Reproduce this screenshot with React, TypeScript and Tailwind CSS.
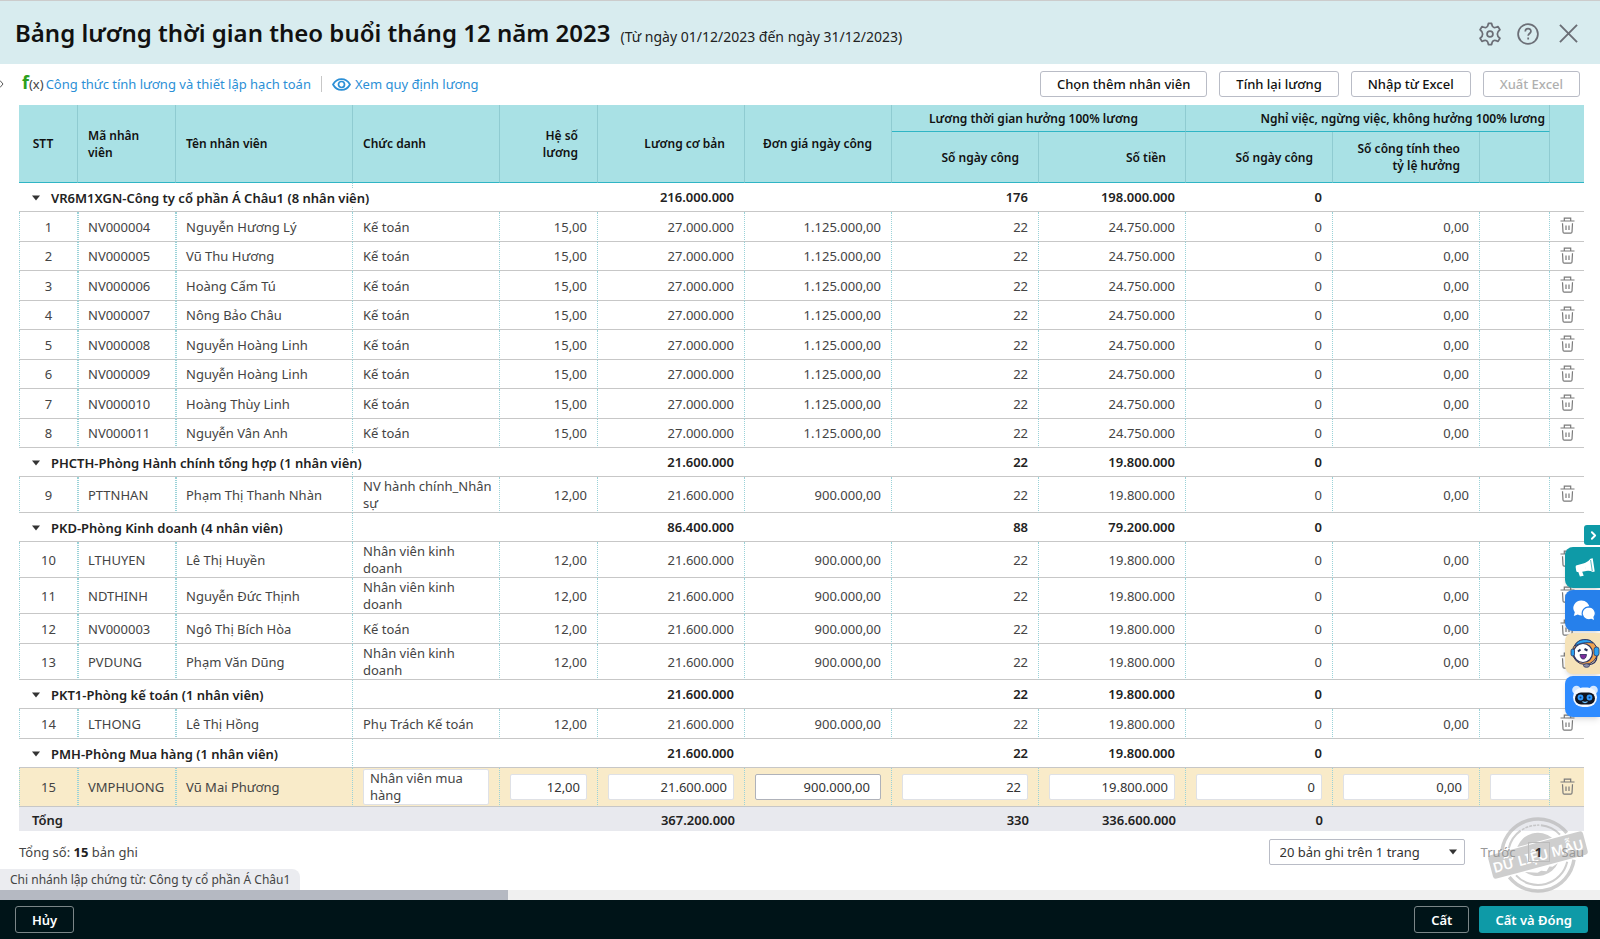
import { ChevronRight } from "lucide-react";

type Employee = {
  no: number;
  code: string;
  name: string;
  title: string;
  factor: string;
  salary: string;
  price: string;
  amount: string;
};

type Group = {
  label: string;
  salary: string;
  days: string;
  amount: string;
  rows: Employee[];
};

const high = { factor: "15,00", salary: "27.000.000", price: "1.125.000,00", amount: "24.750.000" };
const low = { factor: "12,00", salary: "21.600.000", price: "900.000,00", amount: "19.800.000" };

const groups: Group[] = [
  {
    label: "VR6M1XGN-Công ty cổ phần Á Châu1 (8 nhân viên)",
    salary: "216.000.000",
    days: "176",
    amount: "198.000.000",
    rows: [
      { no: 1, code: "NV000004", name: "Nguyễn Hương Lý", title: "Kế toán", ...high },
      { no: 2, code: "NV000005", name: "Vũ Thu Hương", title: "Kế toán", ...high },
      { no: 3, code: "NV000006", name: "Hoàng Cẩm Tú", title: "Kế toán", ...high },
      { no: 4, code: "NV000007", name: "Nông Bảo Châu", title: "Kế toán", ...high },
      { no: 5, code: "NV000008", name: "Nguyễn Hoàng Linh", title: "Kế toán", ...high },
      { no: 6, code: "NV000009", name: "Nguyễn Hoàng Linh", title: "Kế toán", ...high },
      { no: 7, code: "NV000010", name: "Hoàng Thùy Linh", title: "Kế toán", ...high },
      { no: 8, code: "NV000011", name: "Nguyễn Vân Anh", title: "Kế toán", ...high },
    ],
  },
  {
    label: "PHCTH-Phòng Hành chính tổng hợp (1 nhân viên)",
    salary: "21.600.000",
    days: "22",
    amount: "19.800.000",
    rows: [{ no: 9, code: "PTTNHAN", name: "Phạm Thị Thanh Nhàn", title: "NV hành chính_Nhân sự", ...low }],
  },
  {
    label: "PKD-Phòng Kinh doanh (4 nhân viên)",
    salary: "86.400.000",
    days: "88",
    amount: "79.200.000",
    rows: [
      { no: 10, code: "LTHUYEN", name: "Lê Thị Huyền", title: "Nhân viên kinh doanh", ...low },
      { no: 11, code: "NDTHINH", name: "Nguyễn Đức Thịnh", title: "Nhân viên kinh doanh", ...low },
      { no: 12, code: "NV000003", name: "Ngô Thị Bích Hòa", title: "Kế toán", ...low },
      { no: 13, code: "PVDUNG", name: "Phạm Văn Dũng", title: "Nhân viên kinh doanh", ...low },
    ],
  },
  {
    label: "PKT1-Phòng kế toán (1 nhân viên)",
    salary: "21.600.000",
    days: "22",
    amount: "19.800.000",
    rows: [{ no: 14, code: "LTHONG", name: "Lê Thị Hồng", title: "Phụ Trách Kế toán", ...low }],
  },
  {
    label: "PMH-Phòng Mua hàng (1 nhân viên)",
    salary: "21.600.000",
    days: "22",
    amount: "19.800.000",
    rows: [{ no: 15, code: "VMPHUONG", name: "Vũ Mai Phương", title: "Nhân viên mua hàng", ...low }],
  },
];

const EDITING = 15;

const dotL = "border-l border-dotted border-l-[#9ad2d8]";
const dotR = "border-r border-dotted border-r-[#9ad2d8]";
const line = "border-b border-b-[#c7c7c7] [border-bottom-style:solid]";
const fixedCell = `${dotL} ${dotR} ${line}`;
const numCell = `${dotR} ${line} px-2.5 text-right`;
const th = "border-b border-r border-b-[#2fb5c5] border-r-[#8fcbd1] font-semibold text-[#111]";
const input = "h-[26px] w-full rounded-[2px] border bg-white px-1.5 text-right text-[#333] outline-none";

function TrashIcon() {
  return (
    <svg width="15" height="17" viewBox="0 0 15 17" fill="none" stroke="#7a7a7a" strokeWidth="1.2">
      <path d="M0.5 4h14M4.3 3.800V1.100h6.400v2.700M2.500 6.300l0.500 8.700q0.100 1.200 1.200 1.200h6.600q1.100 0 1.200-1.200l0.500-8.700M6 8.500v4.500M9 8.500v4.500" />
    </svg>
  );
}

function GearIcon() {
  return (
    <svg width="22" height="24" viewBox="0 0 24 26" fill="none" stroke="#6b6e76" strokeWidth="1.900" strokeLinejoin="round">
      <path d="M10.300 1.500h3.400q0.600 3.700 2.600 4.400 1.600 0.400 4.500-1l2 3.400q-2.800 2-2.800 4.700t2.800 4.700l-2 3.400q-2.900-1.400-4.500-1-2 0.700-2.600 4.400h-3.400q-0.600-3.700-2.600-4.400-1.600-0.400-4.500 1l-2-3.400q2.800-2 2.800-4.700t-2.800-4.700l2-3.400q2.900 1.400 4.500 1 2-0.700 2.600-4.400z" />
      <circle cx="12" cy="13" r="3.200" />
    </svg>
  );
}

function HelpIcon() {
  return (
    <svg width="22" height="22" viewBox="0 0 24 24" fill="none" stroke="#6b6e76" strokeWidth="1.900">
      <circle cx="12" cy="12" r="10.800" />
      <path d="M9 9.200c0-4 6.200-4 6.200-0.200 0 2.500-3 2.400-3 5M12.200 15.800v2.200" />
    </svg>
  );
}

function EyeIcon() {
  return (
    <svg width="19" height="13" viewBox="0 0 19 13" fill="none" stroke="currentColor" strokeWidth="1.700">
      <path d="M1 6.500C5-0.700 14-0.700 18 6.500 14 13.700 5 13.700 1 6.500z" />
      <circle cx="9.500" cy="6.500" r="3" />
    </svg>
  );
}

function CaretIcon({ className }: { className?: string }) {
  return (
    <svg className={className} width="8" height="6" viewBox="0 0 8 6" fill="#333">
      <path d="M0 0.500h8L4 5.500z" />
    </svg>
  );
}

function MegaphoneIcon() {
  return (
    <svg width="20" height="19" viewBox="0 0 20 19" fill="#fff">
      <path d="M1 7.500l9-2.400 1.200 7.900-4 0.800 1.500 4-3.800 0.700-1.600-4.600-1 0.100q-0.800 0-1-1l-0.600-3.500q-0.100-1.500 0.300-2z" />
      <path d="M9.500 5.200q4-1.500 6-4.400l2.200-0.500 2 13.200-2 0.400q-2.600-1.700-7-1z" />
      <path d="M15.600 2l1.700 11.200" stroke="#0e9aa7" strokeWidth="0.700" />
    </svg>
  );
}

function ChatIcon() {
  return (
    <svg width="23" height="22" viewBox="0 0 23 22" fill="#fff">
      <path d="M8.500 0.500a8 7.500 0 0 0-6.700 11.800L0.800 16l4-1.500A8.500 7.700 0 0 0 8.500 15.500 8 7.500 0 0 0 8.500 0.500z" />
      <path
        d="M15.500 6.800a6.800 6.500 0 1 0 2.800 12.600l3.700 1.600-1-3.900A6.800 6.500 0 0 0 15.500 6.800z"
        stroke="#2680eb"
        strokeWidth="1.200"
      />
    </svg>
  );
}

function AgentIcon() {
  return (
    <svg width="30" height="32" viewBox="0 0 30 32">
      <circle cx="15" cy="14" r="12.500" fill="#f0a34e" stroke="#2d3561" />
      <circle cx="13" cy="15" r="9.500" fill="#fff" stroke="#2d3561" strokeWidth="1.200" />
      <path d="M5 8C7 0 20 0 23 5 17 4 9 5 5 8z" fill="#2aa0f0" stroke="#2d3561" strokeWidth="0.900" />
      <path d="M8 13.500l2.500-2M14.500 11l3 1.500" stroke="#222b55" strokeWidth="2" />
      <path d="M10 16.500h6.500q-0.500 4.500-3.200 4.500t-3.300-4.500z" fill="#7e2d9b" stroke="#222b55" strokeWidth="0.800" />
      <rect x="1" y="11" width="3.500" height="7" rx="1.700" fill="#2aa0f0" stroke="#2d3561" strokeWidth="0.800" />
      <rect x="24" y="9" width="5" height="9" rx="2.500" fill="#2aa0f0" stroke="#2d3561" strokeWidth="0.800" />
      <path d="M27 18q0 8-9 9" fill="none" stroke="#2d3561" strokeWidth="1.200" />
      <ellipse cx="16.500" cy="27.500" rx="3" ry="1.800" fill="#8b8fa8" stroke="#2d3561" strokeWidth="0.800" />
    </svg>
  );
}

function BotIcon() {
  return (
    <svg width="26" height="23" viewBox="0 0 26 23">
      <circle cx="4.500" cy="5" r="4.300" fill="#d5e8ff" />
      <circle cx="21.500" cy="5" r="4.300" fill="#d5e8ff" />
      <rect x="1" y="2.500" width="24" height="19.500" rx="9.500" fill="#f4f9ff" />
      <rect x="3" y="7.500" width="20" height="12" rx="6" fill="#10141f" />
      <circle cx="8.500" cy="12.500" r="2.900" fill="#2f9bff" />
      <circle cx="17.500" cy="12.500" r="2.900" fill="#2f9bff" />
      <circle cx="8.500" cy="12.500" r="1" fill="#0b3a80" />
      <circle cx="17.500" cy="12.500" r="1" fill="#0b3a80" />
      <path d="M10.500 16.500q2.500 2 5 0" stroke="#6cc3ff" fill="none" strokeWidth="1.300" />
    </svg>
  );
}

function SampleStamp() {
  return (
    <svg
      className="pointer-events-none absolute right-[11px] -bottom-1.5 z-10"
      width="102"
      height="82"
      viewBox="0 0 102 82"
      fill="none"
      stroke="#b4b4b4"
    >
      <g transform="rotate(-15 51 41)" opacity="0.65">
        <path d="M17.500 27a36.500 36.500 0 0 1 67 0M17.500 55a36.500 36.500 0 0 0 67 0" strokeWidth="3.500" />
        <path d="M24.500 27a30 30 0 0 1 16-14M61.500 13a30 30 0 0 1 16 14M24.500 55a30 30 0 0 0 53 0" strokeWidth="2" />
        <path d="M42 12.500a30 30 0 0 1 18 0" strokeWidth="1.500" strokeDasharray="3 1" />
        <path d="M33 28a22 22 0 0 1 36 0zM34 54a22 22 0 0 0 34 0l-6 2-3-1-4 4-5-2-4 1z" fill="#b4b4b4" stroke="none" />
        <rect x="2" y="29" width="98" height="24" rx="3" fill="#b4b4b4" stroke="none" />
        <text
          x="51"
          y="47"
          fill="#fff"
          stroke="none"
          textAnchor="middle"
          fontFamily="Noto Sans, sans-serif"
          fontWeight="600"
          fontSize="14"
        >
          DỮ LIỆU MẪU
        </text>
      </g>
    </svg>
  );
}

function EmployeeRow({ row }: { row: Employee }) {
  const editing = row.no === EDITING;
  const tall = row.title.length > 17;
  const height = editing ? "h-[39px] bg-[#f9ebc9]" : tall ? "h-9" : "odd:h-[29px] even:h-[30px]";
  const values = [
    { label: "Hệ số lương", value: row.factor },
    { label: "Lương cơ bản", value: row.salary },
    { label: "Đơn giá ngày công", value: row.price },
    { label: "Số ngày công hưởng lương", value: "22" },
    { label: "Số tiền", value: row.amount },
    { label: "Số ngày công nghỉ việc", value: "0" },
    { label: "Số công tính theo tỷ lệ hưởng", value: "0,00" },
  ];

  return (
    <tr className={height}>
      <td className={`${fixedCell} text-center`}>{row.no}</td>
      <td className={`${fixedCell} px-[9px]`}>{row.code}</td>
      <td className={`${fixedCell} px-[9px]`}>{row.name}</td>
      <td className={`${dotR} ${line} pl-2.5 ${editing ? "pr-2.5" : "pr-1"} ${tall ? "leading-[17px]" : ""}`}>
        {editing ? (
          <textarea
            aria-label="Chức danh"
            rows={2}
            defaultValue={row.title}
            className="block h-9 w-full resize-none overflow-hidden rounded-[2px] border border-[#dfe1e6] bg-white px-1.5 leading-[17px] outline-none"
          />
        ) : (
          row.title
        )}
      </td>
      {values.map((v) => (
        <td key={v.label} className={numCell}>
          {editing ? (
            <input
              aria-label={v.label}
              defaultValue={v.value}
              className={v.value === row.price ? `${input} border-[#afb2ba] pr-2.5` : `${input} border-[#dfe1e6]`}
            />
          ) : (
            v.value
          )}
        </td>
      ))}
      <td className={`${dotR} ${line} pl-2.5`}>
        {editing && (
          <input aria-label="Số tiền nghỉ việc" className={`${input} rounded-r-none border-r-0 border-[#dfe1e6]`} />
        )}
      </td>
      <td className={line}>
        <button aria-label={`Xóa ${row.code}`} className="mx-auto block pb-0.5">
          <TrashIcon />
        </button>
      </td>
    </tr>
  );
}

function GroupRow({ group }: { group: Group }) {
  return (
    <tr className="h-[29px] font-semibold text-[#222]">
      <td colSpan={3} className={`${dotR} ${line}`}>
        <button className="relative z-10 ml-[13px] flex items-center gap-[11px] pt-0.5 whitespace-nowrap">
          <CaretIcon />
          <span className="bg-white">{group.label}</span>
        </button>
      </td>
      <td className={line} />
      <td className={line} />
      <td className={`${line} px-[11px] text-right`}>{group.salary}</td>
      <td className={line} />
      <td className={`${line} px-[11px] text-right`}>{group.days}</td>
      <td className={`${line} px-[11px] text-right`}>{group.amount}</td>
      <td className={`${line} px-[11px] text-right`}>0</td>
      <td className={line} />
      <td className={line} />
      <td className={line} />
    </tr>
  );
}

function PayrollTable() {
  return (
    <table className="w-full table-fixed border-separate border-spacing-0">
      <colgroup>
        <col className="w-[59px]" />
        <col className="w-[98px]" />
        <col className="w-[177px]" />
        <col className="w-[147px]" />
        <col className="w-[98px]" />
        <col className="w-[147px]" />
        <col className="w-[147px]" />
        <col className="w-[147px]" />
        <col className="w-[147px]" />
        <col className="w-[147px]" />
        <col className="w-[147px]" />
        <col />
        <col className="w-[34px]" />
      </colgroup>
      <thead className="bg-[#a9e1e5] text-xs leading-[17px]">
        <tr className="h-[27px]">
          <th rowSpan={2} className={`${th} pr-2.5`}>STT</th>
          <th rowSpan={2} className={`${th} px-2.5 text-left`}>Mã nhân viên</th>
          <th rowSpan={2} className={`${th} px-2.5 text-left`}>Tên nhân viên</th>
          <th rowSpan={2} className={`${th} px-2.5 text-left`}>Chức danh</th>
          <th rowSpan={2} className={`${th} pr-[19px] pl-8 text-right`}>Hệ số lương</th>
          <th rowSpan={2} className={`${th} pr-[19px] text-right`}>Lương cơ bản</th>
          <th rowSpan={2} className={`${th} pr-[19px] text-right`}>Đơn giá ngày công</th>
          <th colSpan={2} className={`${th} pr-2.5`}>Lương thời gian hưởng 100% lương</th>
          <th colSpan={3} className={`${th} pr-1 text-right`}>Nghỉ việc, ngừng việc, không hưởng 100% lương</th>
          <th rowSpan={2} className="border-b border-b-[#2fb5c5]" />
        </tr>
        <tr className="h-[51px]">
          <th className={`${th} pr-[19px] text-right`}>Số ngày công</th>
          <th className={`${th} pr-[19px] text-right`}>Số tiền</th>
          <th className={`${th} pr-[19px] text-right`}>Số ngày công</th>
          <th className={`${th} pr-[19px] pl-4 text-right`}>Số công tính theo tỷ lệ hưởng</th>
          <th className={th} />
        </tr>
      </thead>
      {groups.map((group) => (
        <tbody key={group.label}>
          <GroupRow group={group} />
          {group.rows.map((row) => (
            <EmployeeRow key={row.no} row={row} />
          ))}
        </tbody>
      ))}
      <tfoot className="bg-[#e8e9ee] font-semibold text-[#222]">
        <tr className="h-6">
          <td colSpan={5} className="pt-0.5 pl-[13px]">Tổng</td>
          <td className="pt-0.5 pr-2.5 text-right">367.200.000</td>
          <td />
          <td className="pt-0.5 pr-2.5 text-right">330</td>
          <td className="pt-0.5 pr-2.5 text-right">336.600.000</td>
          <td className="pt-0.5 pr-2.5 text-right">0</td>
          <td colSpan={3} />
        </tr>
      </tfoot>
    </table>
  );
}

function SideWidgets() {
  const base = "flex h-[41px] w-[35px] items-center justify-center rounded-l-lg shadow-md";

  return (
    <aside className="absolute top-[525px] right-0 z-20 flex flex-col items-end gap-0.5">
      <button aria-label="Thu gọn" className="flex h-5 w-4 items-center justify-center rounded-l-[3px] bg-[#0e9aa7] pl-0.5 text-white">
        <ChevronRight size={13} strokeWidth={3.5} />
      </button>
      <button aria-label="Thông báo" className={`${base} bg-[#0e9aa7] pl-1`}>
        <MegaphoneIcon />
      </button>
      <button aria-label="Trò chuyện" className={`${base} bg-[#2680eb] pl-1`}>
        <ChatIcon />
      </button>
      <button aria-label="Tư vấn viên" className={`${base} bg-[#f5e2b8] pl-1`}>
        <AgentIcon />
      </button>
      <button aria-label="Trợ lý ảo" className={`${base} bg-[#2e8bff] pl-1`}>
        <BotIcon />
      </button>
    </aside>
  );
}

export default function App() {
  const toolButton = "h-[26px] rounded-[3px] border border-[#b9bcc6] bg-white px-4 font-medium";

  return (
    <div className="relative flex min-h-screen flex-col overflow-hidden bg-white font-['Noto_Sans',sans-serif] text-[13px] leading-[18px] text-[#444]">
      <header className="flex h-16 items-center justify-between border-t border-[#ccc] bg-[#d8ecef] pt-0.5 pr-[22px] pl-[15px]">
        <div className="flex items-baseline gap-2.5 pb-0.5">
          <h1 className="text-2xl font-semibold text-[#111]">Bảng lương thời gian theo buổi tháng 12 năm 2023</h1>
          <span className="text-sm text-[#222]">(Từ ngày 01/12/2023 đến ngày 31/12/2023)</span>
        </div>
        <div className="flex items-center">
          <button aria-label="Thiết lập" className="mr-4"><GearIcon /></button>
          <button aria-label="Trợ giúp" className="mr-5"><HelpIcon /></button>
          <button aria-label="Đóng">
            <svg width="19" height="19" viewBox="0 0 20 20" stroke="#6b6e76" strokeWidth="2">
              <path d="M1 1l18 18M19 1L1 19" />
            </svg>
          </button>
        </div>
      </header>

      <div className="flex h-[41px] items-center justify-between pr-5 pb-px">
        <div className="flex items-center">
          <span className="flex w-[22px] text-[#555]">
            <svg width="4" height="8" viewBox="0 0 4 8" fill="none" stroke="currentColor">
              <path d="M0 0.500l3 3.500-3 3.500" />
            </svg>
          </span>
          <span className="mr-0.5 flex items-center text-[#444]">
            <b className="pb-1 text-lg leading-[18px] text-[#2ca01c]">f</b>(x)
          </span>
          <a href="#formula" className="text-[#2b8fd6]">Công thức tính lương và thiết lập hạch toán</a>
          <span className="mx-2.5 h-4 w-px bg-[#c7c7c7]" />
          <a href="#rules" className="flex items-center gap-1 text-[#2b8fd6]">
            <EyeIcon />
            Xem quy định lương
          </a>
        </div>
        <div className="flex gap-3">
          <button className={`${toolButton} text-[#111]`}>Chọn thêm nhân viên</button>
          <button className={`${toolButton} text-[#111]`}>Tính lại lương</button>
          <button className={`${toolButton} text-[#111]`}>Nhập từ Excel</button>
          <button disabled className={`${toolButton} text-[#afafaf]`}>Xuất Excel</button>
        </div>
      </div>

      <main className="flex-1 pr-4 pl-[19px]">
        <PayrollTable />
        <div className="flex items-center justify-between pt-2">
          <div>
            Tổng số: <b className="text-[#222]">15</b> bản ghi
          </div>
          <div className="relative z-20 flex items-center text-[#999]">
            <div className="relative">
              <select aria-label="Số bản ghi trên trang" className="h-[26px] w-[196px] appearance-none rounded-[2px] border border-[#b9bcc6] bg-white pl-2.5 text-[#333]">
                <option>20 bản ghi trên 1 trang</option>
              </select>
              <CaretIcon className="pointer-events-none absolute top-2.5 right-2" />
            </div>
            <button disabled className="ml-4">Trước</button>
            <button className="mx-3 h-5 w-[22px] border border-[#bbb] font-bold text-[#333]">1</button>
            <button disabled>Sau</button>
          </div>
        </div>
      </main>

      <div className="relative">
        <div className="w-fit rounded-tr-lg bg-[#ebecf0] px-2.5 py-0.5 text-xs leading-[17px]">
          Chi nhánh lập chứng từ: Công ty cổ phần Á Châu1
        </div>
        <SampleStamp />
      </div>
      <div className="h-2.5 bg-[#f0f0f0]">
        <div className="h-full w-[508px] bg-[#b5b9c2]" />
      </div>

      <footer className="flex h-[39px] items-center justify-between bg-[#001418] pr-3 pl-[15px] font-semibold text-white">
        <button className="h-[27px] rounded-[3px] border border-[#7b8688] px-4">Hủy</button>
        <div className="flex gap-2.5">
          <button className="h-[27px] rounded-[3px] border border-[#7b8688] px-4">Cất</button>
          <button className="h-[27px] rounded-[3px] bg-[#0e9aa7] px-4">Cất và Đóng</button>
        </div>
      </footer>

      <SideWidgets />
    </div>
  );
}
